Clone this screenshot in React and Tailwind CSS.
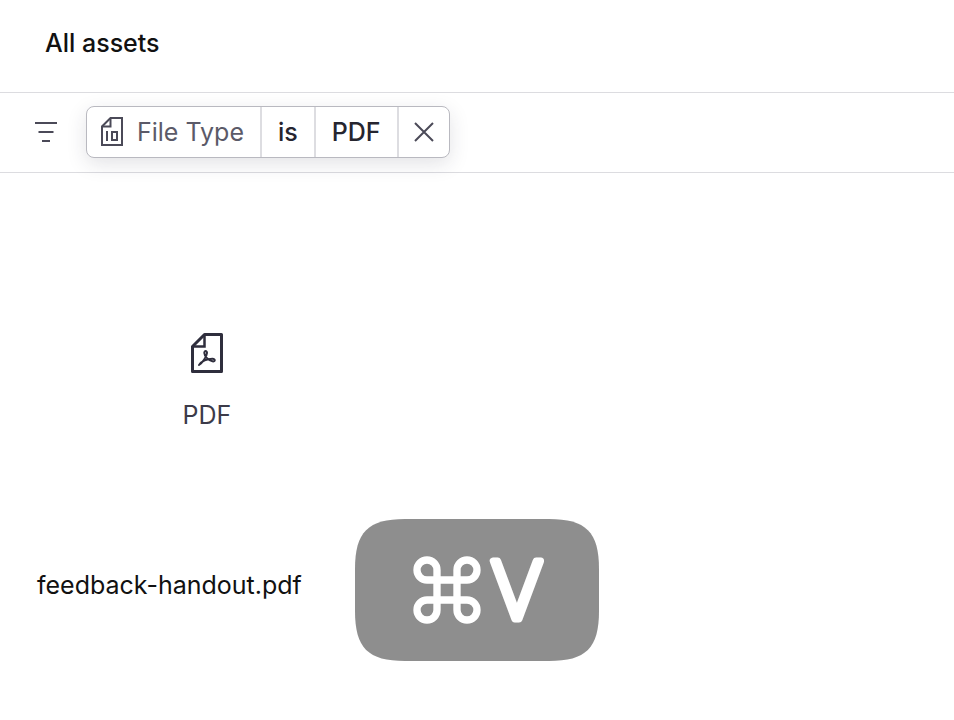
import React, { useState } from "react";
import { Command } from "lucide-react";

const FilterIcon = () => (
  <svg className="h-6 w-6" viewBox="0 0 24 24" fill="none" stroke="#4b4a58" strokeWidth="2" aria-hidden="true">
    <path d="M1 3h22M4.5 12h15M8 21h8" />
  </svg>
);

// Page with a folded corner and binary digits
const FileTypeIcon = () => (
  <svg className="h-8 w-6" viewBox="0 0 24 32" fill="none" stroke="#4b4a58" strokeWidth="2" aria-hidden="true">
    <path d="M10.5 2H22v27H2V10.5z" />
    <path d="M10.5 2v8.5H2" />
    <path d="M7 15v10" />
    <path d="M12 16h5v8h-5z" />
  </svg>
);

const PdfIcon = () => (
  <svg className="h-10 w-8" viewBox="0 0 32 40" fill="none" stroke="#2f2e3d" aria-hidden="true">
    <path d="M13.5 1.5h17v37h-29v-25z" strokeWidth="3" strokeLinejoin="round" />
    <path d="M13.5 2v11.5H2" strokeWidth="2.5" />
    <path
      d="M8 32C11.5 30 15.7 23.500 16 20c.1-2.600-2.800-2.600-2.700 0C13.500 23.500 17.500 27.500 21.500 28.300c3 .6 3-2.600 0-2.500-4.500.1-10.500 2.200-13.500 6.200z"
      strokeWidth="2"
      strokeLinejoin="round"
    />
  </svg>
);

const CloseIcon = () => (
  <svg className="h-5 w-5" viewBox="0 0 20 20" fill="none" stroke="#4b4a58" strokeWidth="2" aria-hidden="true">
    <path d="M1 1l18 18M19 1L1 19" />
  </svg>
);

const FilterPill = ({ onRemove }) => (
  <div className="flex h-13 items-stretch divide-x-2 divide-[#dddde1] overflow-hidden rounded-lg border border-[#b9b9c0] bg-white shadow-[0_6px_20px_rgba(40,40,60,0.13)]">
    <button type="button" className="flex items-center gap-[13px] pr-4 pl-[13px] text-[#5b5a68]">
      <FileTypeIcon />
      File Type
    </button>
    <button type="button" className="px-4 font-medium">
      is
    </button>
    <button type="button" className="px-4 font-medium">
      PDF
    </button>
    <button type="button" aria-label="Remove filter" className="px-[15px]" onClick={onRemove}>
      <CloseIcon />
    </button>
  </div>
);

const AssetTile = ({ type, name }) => (
  <figure className="flex w-85 flex-col gap-[138px] pt-40">
    <div className="flex flex-col items-center gap-[26px] text-[#3c3b49]">
      <PdfIcon />
      <span>{type}</span>
    </div>
    <figcaption className="text-[#111111]">{name}</figcaption>
  </figure>
);

const KeyOverlay = () => (
  <kbd className="fixed bottom-[59px] left-1/2 flex h-[142px] w-61 -translate-x-1/2 items-center justify-center text-white">
    <svg className="absolute inset-0 h-full w-full" viewBox="0 0 244 142" fill="#8e8e8e" aria-hidden="true">
      <path d="M0 50C0 13 13 0 50 0H194C231 0 244 13 244 50V92C244 129 231 142 194 142H50C13 142 0 129 0 92Z" />
    </svg>
    <Command className="relative h-20 w-20" strokeWidth={2.2} />
    <svg className="relative h-20 w-15 overflow-visible" viewBox="0 0 60 80">
      <text
        x="30"
        y="69"
        textAnchor="middle"
        className="fill-white stroke-white font-['Open_Sans',sans-serif] text-[82px] leading-none font-light"
        strokeWidth="7"
        strokeLinejoin="round"
      >
        V
      </text>
    </svg>
  </kbd>
);

const App = () => {
  const [filtered, setFiltered] = useState(true);

  return (
    <div className="min-h-screen bg-white font-['Inter',sans-serif] text-[25px] leading-8 text-[#26252f]">
      <header className="flex h-23 items-center px-[45px] pb-[6px]">
        <h1 className="font-medium text-[#111111]">All assets</h1>
      </header>

      <div className="flex h-[81px] items-center gap-7 border-y border-[#dcdce0] px-[34px] pb-[2px]">
        <button type="button" aria-label="Filter">
          <FilterIcon />
        </button>
        {filtered && <FilterPill onRemove={() => setFiltered(false)} />}
      </div>

      <main className="px-[37px]">
        <AssetTile type="PDF" name="feedback-handout.pdf" />
      </main>

      <KeyOverlay />
    </div>
  );
};

export default App;
